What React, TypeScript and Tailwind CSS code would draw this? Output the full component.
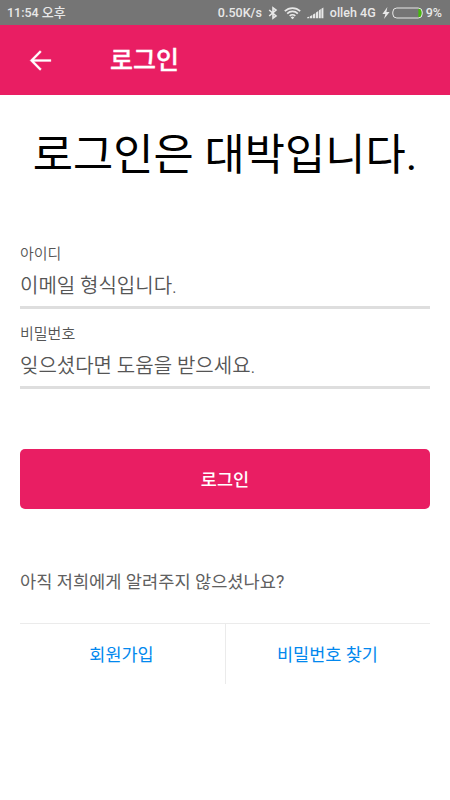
import React, { useState } from 'react';

interface FieldProps {
  id: string;
  label: string;
  placeholder: string;
  type: string;
  value: string;
  onChange: (value: string) => void;
}

const StatusBar: React.FC = () => {
  return (
    <div className="h-[25px] pt-px bg-[#757575] pl-[7px] pr-2 flex items-center justify-between text-[12.5px] leading-none font-medium text-[#e8e8e8] whitespace-nowrap">
      <span>11:54 <span className="text-[13px]">오후</span></span>
      <div className="flex items-center">
        <span>0.50K/s</span>
        <svg className="ml-[6px]" width="10" height="14" viewBox="0 0 10 14" fill="none" stroke="currentColor" strokeWidth="1.6">
          <path d="M1.2 4 8 10 5 12.2V1.8L8 4 1.2 10" />
        </svg>
        <svg className="ml-[6px] mb-px" width="17" height="14" viewBox="0 0 17 14" fill="none" stroke="currentColor" strokeWidth="1.7">
          <path d="M.8 5.2a11 11 0 0 1 15.4 0M3.2 7.6a7.6 7.6 0 0 1 10.6 0M5.7 10a4 4 0 0 1 5.6 0" />
          <path d="M8.5 13.2 6.7 11.4a2.5 2.5 0 0 1 3.6 0Z" fill="currentColor" stroke="none" />
        </svg>
        <svg className="ml-[6px]" width="17" height="12" viewBox="0 0 17 12" fill="currentColor">
          <path d="M0 11.2V10.6l2.3-1v1.6ZM3 11.2V9.2l2.3-1.1v3.1ZM6 11.2V7.6l2.3-1.3v4.9ZM9 11.2V5.5l2.3-1.4v7.1ZM12 11.2V3.2l1.8-1.1v9.1ZM14.4 11.2V1.8L16.4 .6v10.6Z" />
        </svg>
        <span className="ml-[6px]">olleh 4G</span>
        <svg className="ml-[6px]" width="8" height="12" viewBox="0 0 8 12" fill="currentColor">
          <path d="M5.4 0 .4 7h3L2 12 7.6 5H4.4Z" />
        </svg>
        <svg className="ml-[2px] mb-px" width="31" height="12" viewBox="0 0 31 12" fill="none">
          <path d="M26.4 1.5h1a2.5 2.5 0 0 1 2.3 2.3v4.4a2.5 2.5 0 0 1-2.3 2.3h-1Z" fill="#45b90b" />
          <rect x=".8" y="1" width="29.4" height="10" rx="4" stroke="currentColor" />
        </svg>
        <span className="ml-[3px]">9%</span>
      </div>
    </div>
  );
};

const Field: React.FC<FieldProps> = ({ id, label, placeholder, type, value, onChange }) => {
  return (
    <div className="h-20 flex flex-col">
      <label htmlFor={id} className="h-[22px] text-[15px] leading-[23px] font-[350] text-[#555]">
        {label}
      </label>
      <input
        id={id}
        type={type}
        value={value}
        placeholder={placeholder}
        onChange={(e) => onChange(e.target.value)}
        className="w-full h-[44px] pt-px text-[20px] font-[350] text-[#555] placeholder:text-[#555] border-b-[3px] border-[#dedede] outline-none"
      />
    </div>
  );
};

const App: React.FC = () => {
  const [email, setEmail] = useState('');
  const [password, setPassword] = useState('');

  return (
    <div className="w-full h-screen bg-white overflow-hidden font-[Roboto,'Noto_Sans_CJK_KR',sans-serif]">
      <StatusBar />
      <header className="h-[70px] bg-[#e91e63] pl-7 flex items-center text-white">
        <button type="button" aria-label="뒤로" className="w-[82px]">
          <svg width="25" height="25" viewBox="0 0 24 24" fill="currentColor">
            <path d="M22 11H5.8l7.1-7.1L11.5 2.5 2 12l9.5 9.5 1.4-1.4L5.8 13H22Z" stroke="currentColor" strokeWidth=".3" />
          </svg>
        </button>
        <h1 className="pt-px text-[25px] leading-none font-medium [-webkit-text-stroke:0.3px_white]">로그인</h1>
      </header>

      <main className="px-5">
        <h2 className="h-[148px] pt-[28px] text-[43.75px] leading-[64px] text-black text-center whitespace-nowrap">로그인은 대박입니다.</h2>
        <form onSubmit={(e) => e.preventDefault()}>
          <Field id="email" type="text" label="아이디" placeholder="이메일 형식입니다." value={email} onChange={setEmail} />
          <Field id="password" type="password" label="비밀번호" placeholder="잊으셨다면 도움을 받으세요." value={password} onChange={setPassword} />
          <button type="submit" className="mt-[46px] w-full h-[60px] pt-[2px] rounded-[5px] bg-[#e91e63] text-[17.5px] font-medium text-white block">
            로그인
          </button>
        </form>

        <p className="mt-[60px] text-[17.6px] leading-[26px] text-[#606060]">아직 저희에게 알려주지 않으셨나요?</p>
        <div className="mt-[28px] h-[61px] flex border-t border-[#ebebeb] text-[17.5px] text-[#0288ee]">
          <button type="button" className="w-[206px] pt-[2px] pr-[2px] border-r border-[#ebebeb]">회원가입</button>
          <button type="button" className="flex-1 pt-[2px] pr-px">비밀번호 찾기</button>
        </div>
      </main>
    </div>
  );
};

export default App;
